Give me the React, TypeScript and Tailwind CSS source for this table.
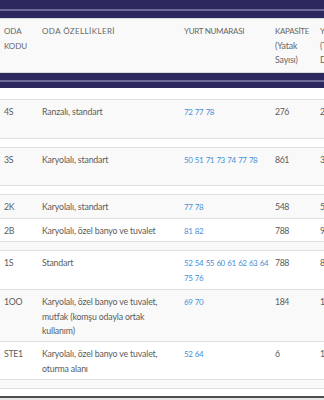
import React from 'react';

type Row = {
  kind: 'data' | 'gap';
  h: number;
  bg: string;
  code?: string;
  desc?: string[];
  nums?: string[];
  cap?: string;
  fee?: string;
};

const GRAY = 'bg-[#f9f9f9]';
const WHITE = 'bg-white';

const rows: Row[] = [
  { kind: 'gap', h: 11, bg: WHITE },
  { kind: 'data', h: 39, bg: GRAY, code: '4S', desc: ['Ranzalı, standart'], nums: ['72 77 78'], cap: '276', fee: '2.150' },
  { kind: 'gap', h: 9, bg: WHITE },
  { kind: 'data', h: 38, bg: GRAY, code: '3S', desc: ['Karyolalı, standart'], nums: ['50 51 71 73 74 77 78'], cap: '861', fee: '3.250' },
  { kind: 'gap', h: 9, bg: WHITE },
  { kind: 'data', h: 24, bg: GRAY, code: '2K', desc: ['Karyolalı, standart'], nums: ['77 78'], cap: '548', fee: '5.100' },
  { kind: 'data', h: 23, bg: WHITE, code: '2B', desc: ['Karyolalı, özel banyo ve tuvalet'], nums: ['81 82'], cap: '788', fee: '9.200' },
  { kind: 'gap', h: 9, bg: GRAY },
  { kind: 'data', h: 39, bg: WHITE, code: '1S', desc: ['Standart'], nums: ['52 54 55 60 61 62 63 64', '75 76'], cap: '788', fee: '8.400' },
  { kind: 'data', h: 52, bg: GRAY, code: '1OO', desc: ['Karyolalı, özel banyo ve tuvalet,', 'mutfak (komşu odayla ortak', 'kullanım)'], nums: ['69 70'], cap: '184', fee: '12.500' },
  { kind: 'data', h: 38, bg: WHITE, code: 'STE1', desc: ['Karyolalı, özel banyo ve tuvalet,', 'oturma alanı'], nums: ['52 64'], cap: '6', fee: '15.000' },
  { kind: 'gap', h: 9, bg: GRAY },
  { kind: 'gap', h: 8, bg: WHITE },
];

const cols = 'grid grid-cols-[38px_142px_91px_45px_80px]';

export default function App() {
  return (
    <div
      className="w-[324px] h-[400px] overflow-hidden bg-white text-[8.75px] leading-[14.5px] text-[#5c5c5c]"
      style={{ fontFamily: 'Lato, "Open Sans", sans-serif' }}
    >
      <div className="h-[9px] bg-[#2c295e]" />
      <div className="h-[2px] bg-[#6e6c96]" />
      <div className="h-[7px] bg-[#2c295e]" />
      <div className="h-px bg-[#dcdcdc]" />

      {/* table head */}
      <div className={`${cols} h-[53px] ${GRAY} pt-[5px] text-[#666]`}>
        <div className="pl-1 whitespace-nowrap text-[8px] tracking-[-0.1px]">ODA<br />KODU</div>
        <div className="pl-1 whitespace-nowrap text-[8px] tracking-[0.4px]">ODA ÖZELLİKLERİ</div>
        <div className="pl-1 whitespace-nowrap text-[8px] tracking-[-0.3px]">YURT NUMARASI</div>
        <div className="pl-1 whitespace-nowrap tracking-[-0.15px]">
          <span className="text-[8px] tracking-[-0.3px]">KAPASİTE</span><br />(Yatak<br />Sayısı)
        </div>
        <div className="pl-1 whitespace-nowrap">
          <span className="text-[8px] tracking-[-0.3px]">YILLIK</span><br />(TL /<br />Dönem)
        </div>
      </div>
      <div className="h-px bg-[#dcdcdc]" />
      <div className="h-[7px] bg-[#2c295e]" />
      <div className="h-[2px] bg-[#6e6c96]" />
      <div className="h-[6px] bg-[#2c295e]" />

      {rows.map((r, i) => (
        <div
          key={i}
          className={`${r.bg} ${i > 0 ? 'border-t border-[#dedede]' : ''}`}
          style={{ height: r.h }}
        >
          {r.kind === 'data' && (
            <div className={`${cols} pt-[5px]`}>
              <div className="pl-1 whitespace-nowrap tracking-[-0.3px]">{r.code}</div>
              <div className="pl-1 whitespace-nowrap tracking-[-0.15px]">
                {r.desc!.map((d) => (
                  <div key={d}>{d}</div>
                ))}
              </div>
              <div className="pl-1 whitespace-nowrap text-[8px] text-[#4a8fd6] tracking-[-0.5px] [word-spacing:1px]">
                {r.nums!.map((n) => (
                  <div key={n}>{n}</div>
                ))}
              </div>
              <div className="pl-1 whitespace-nowrap tracking-[-0.4px]">{r.cap}</div>
              <div className="pl-1 whitespace-nowrap tracking-[-0.4px]">{r.fee}</div>
            </div>
          )}
        </div>
      ))}
      <div className="h-[2px] bg-[#4d4d4d]" />
      <div className="h-[20px] bg-[#e6e6e6]" />
    </div>
  );
}
